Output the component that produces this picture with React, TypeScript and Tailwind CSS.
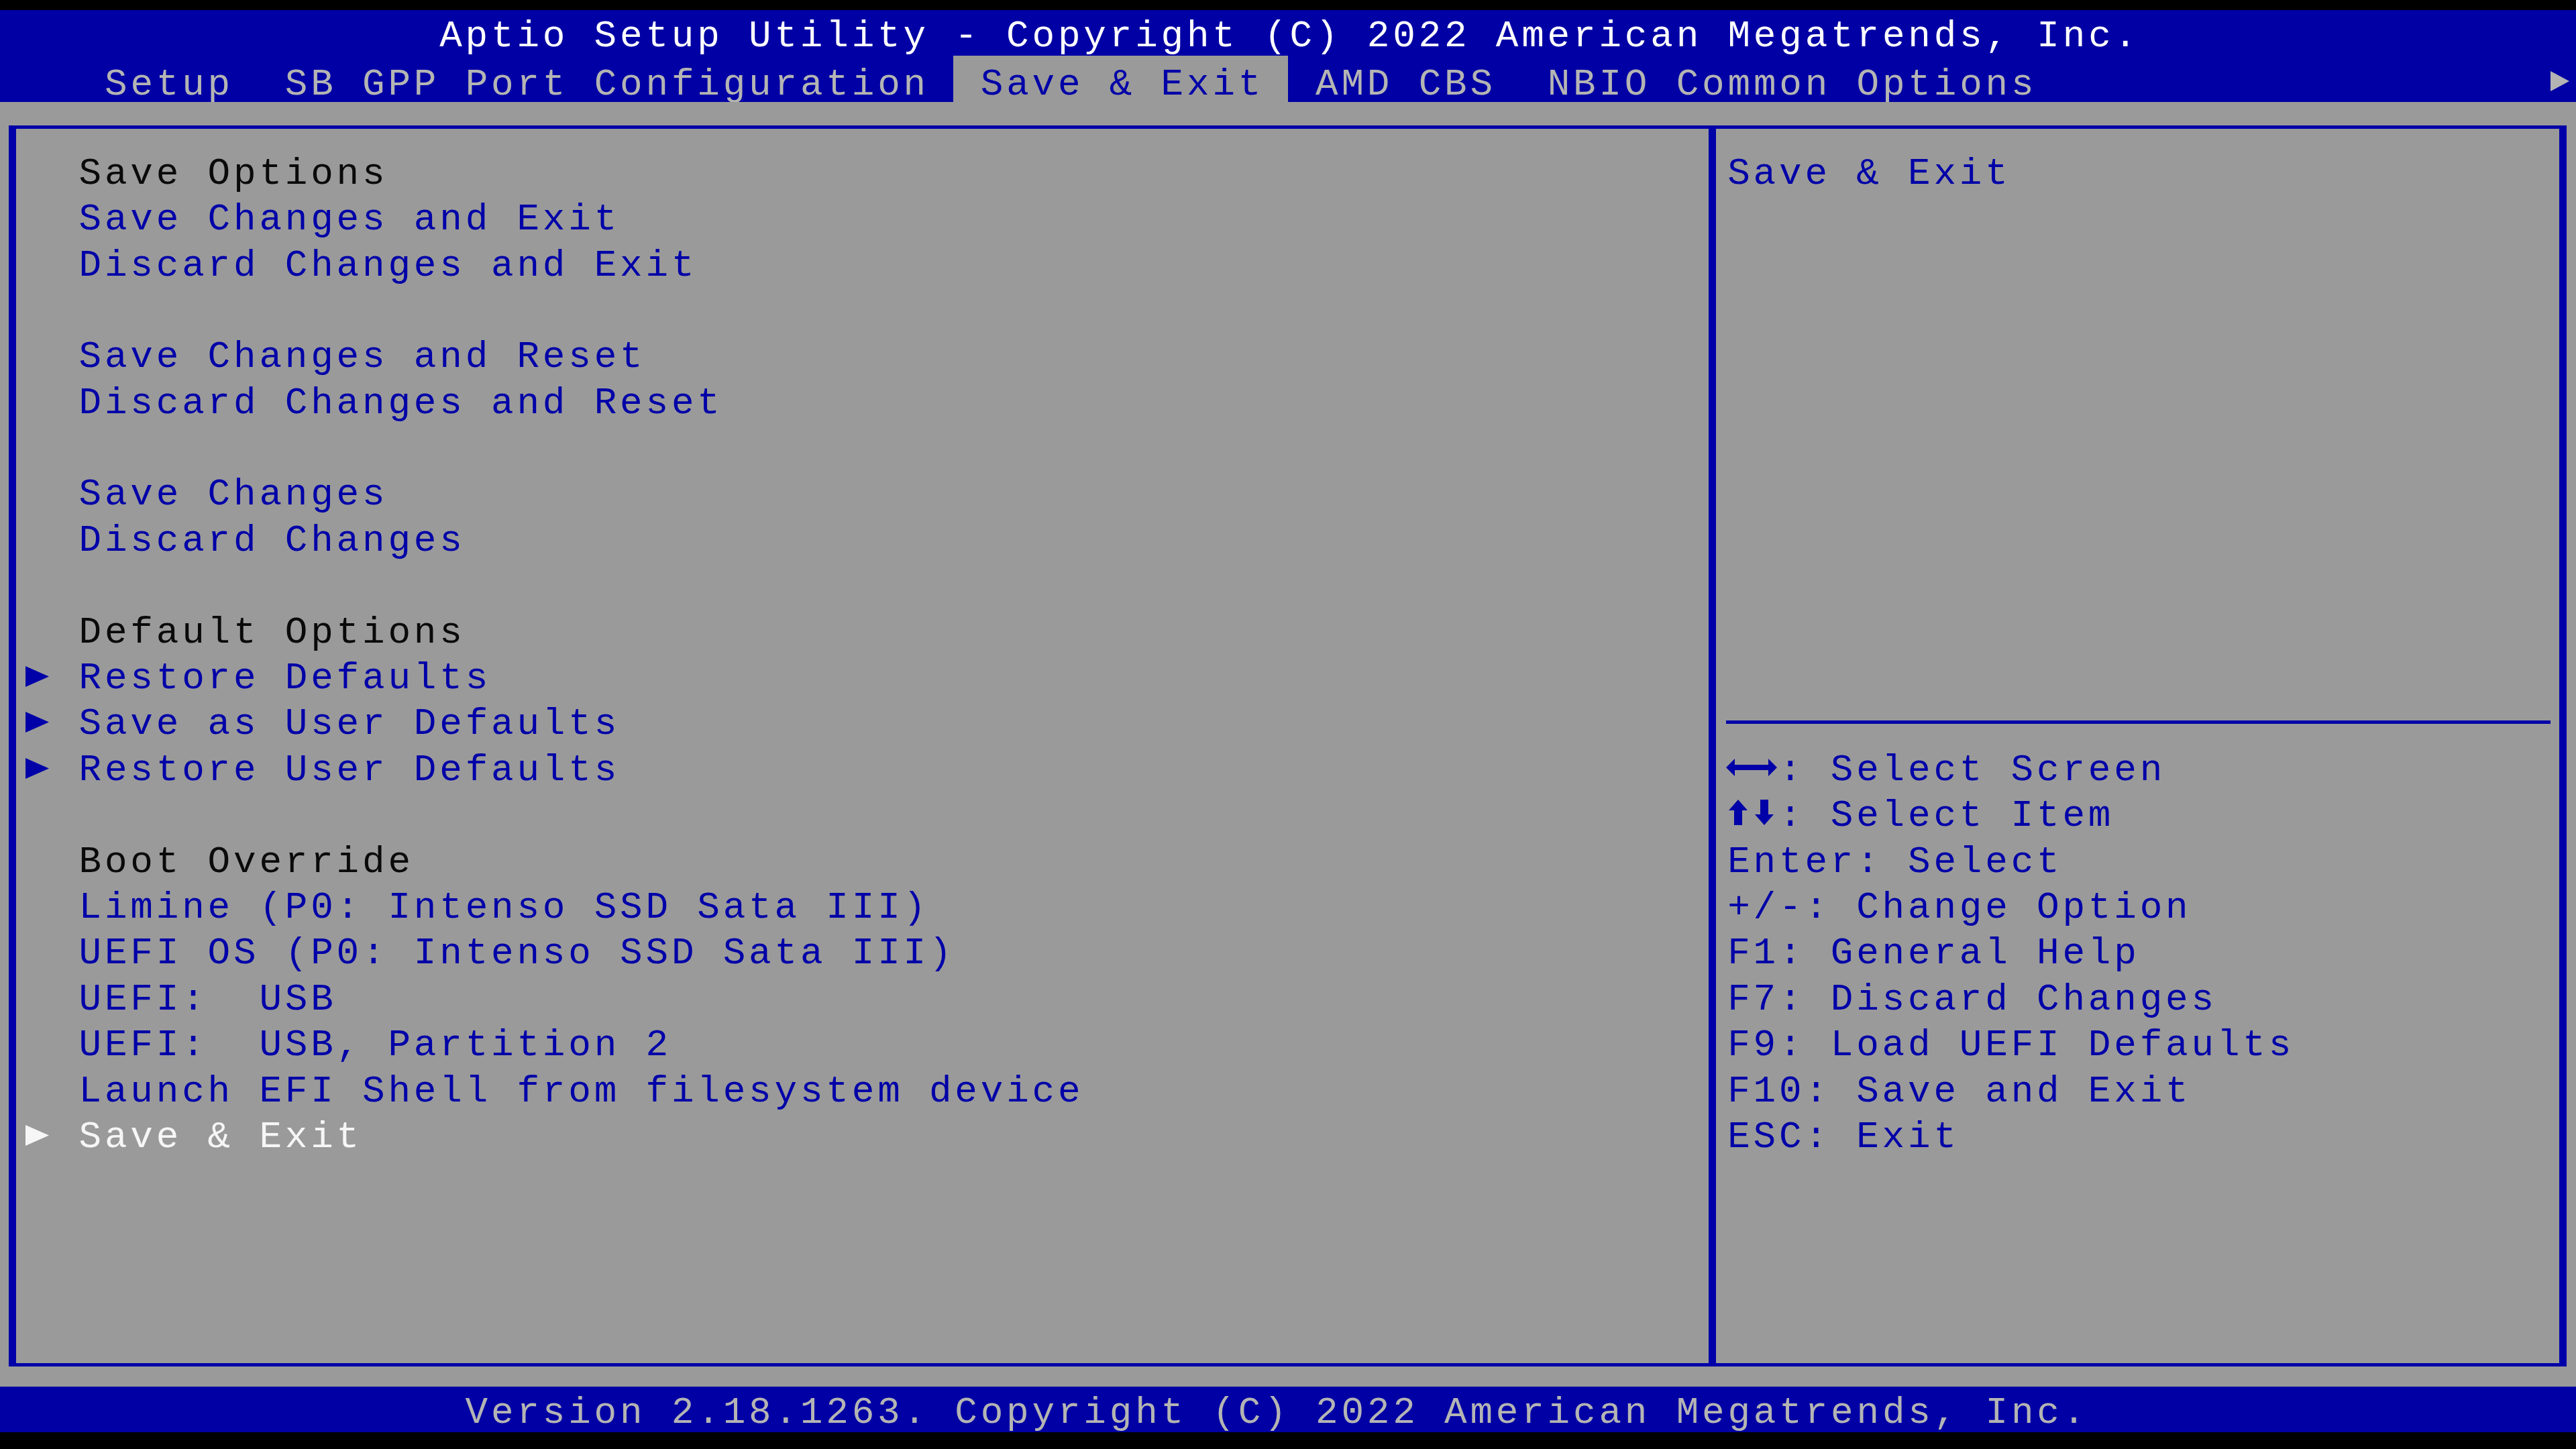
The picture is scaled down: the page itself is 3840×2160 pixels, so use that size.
import React from 'react';

// Aptio text-mode screen: 100 x 31 character cells, each 38.4 x 68.4 px
type Tone = 'head' | 'link' | 'active';

interface MenuItem {
  text: string;
  tone: Tone;
  sub?: boolean;
}

const toneClass: Record<Tone, string> = {
  head: 'text-[#0a0a0a]',
  link: 'text-[#0000a8]',
  active: 'text-[#f6f6f6]',
};

const menu: (MenuItem | null)[] = [
  { text: 'Save Options', tone: 'head' },
  { text: 'Save Changes and Exit', tone: 'link' },
  { text: 'Discard Changes and Exit', tone: 'link' },
  null,
  { text: 'Save Changes and Reset', tone: 'link' },
  { text: 'Discard Changes and Reset', tone: 'link' },
  null,
  { text: 'Save Changes', tone: 'link' },
  { text: 'Discard Changes', tone: 'link' },
  null,
  { text: 'Default Options', tone: 'head' },
  { text: 'Restore Defaults', tone: 'link', sub: true },
  { text: 'Save as User Defaults', tone: 'link', sub: true },
  { text: 'Restore User Defaults', tone: 'link', sub: true },
  null,
  { text: 'Boot Override', tone: 'head' },
  { text: 'Limine (P0: Intenso SSD Sata III)', tone: 'link' },
  { text: 'UEFI OS (P0: Intenso SSD Sata III)', tone: 'link' },
  { text: 'UEFI:  USB', tone: 'link' },
  { text: 'UEFI:  USB, Partition 2', tone: 'link' },
  { text: 'Launch EFI Shell from filesystem device', tone: 'link' },
  { text: 'Save & Exit', tone: 'active', sub: true },
];

const tabs = ['Setup', 'SB GPP Port Configuration', 'Save & Exit', 'AMD CBS', 'NBIO Common Options'];

const keyHelp = [
  'Enter: Select',
  '+/-: Change Option',
  'F1: General Help',
  'F7: Discard Changes',
  'F9: Load UEFI Defaults',
  'F10: Save and Exit',
  'ESC: Exit',
];

const row = 'h-[68.4px] flex';
const txt = 'pt-[10.6px] leading-[57.8px] whitespace-pre';

const Pointer = ({ className }: { className: string }) => (
  <svg width="35" height="31" viewBox="0 0 35 31" className={className}>
    <polygon points="0,0 35,15.5 0,31" fill="currentColor" />
  </svg>
);

const ArrowLeft = () => (
  <svg width="38" height="28" viewBox="0 0 38 28" className="fill-[#0000a8]">
    <path d="M0 14 L13 1 L13 10 L38 10 L38 18 L13 18 L13 27 Z" />
  </svg>
);

const ArrowRight = () => (
  <svg width="38" height="28" viewBox="0 0 38 28" className="fill-[#0000a8]">
    <path d="M38 14 L25 1 L25 10 L0 10 L0 18 L25 18 L25 27 Z" />
  </svg>
);

const ArrowUp = () => (
  <svg width="28" height="38" viewBox="0 0 28 38" className="fill-[#0000a8]">
    <path d="M14 0 L28 16 L20 16 L20 38 L8 38 L8 16 L0 16 Z" />
  </svg>
);

const ArrowDown = () => (
  <svg width="28" height="38" viewBox="0 0 28 38" className="fill-[#0000a8]">
    <path d="M14 38 L28 22 L20 22 L20 0 L8 0 L8 22 L0 22 Z" />
  </svg>
);

export default function App() {
  return (
    <div className="w-[3840px] h-[2160px] bg-black flex flex-col overflow-hidden font-['Liberation_Mono','DejaVu_Sans_Mono',monospace] text-[56px] tracking-[4.8px]">
      <div className="h-[15px] shrink-0" />

      {/* title + tab bar */}
      <header className="bg-[#0000a4] shrink-0">
        <div className={`${row} pl-[655.2px] text-white`}>
          <span className={txt}>Aptio Setup Utility - Copyright (C) 2022 American Megatrends, Inc.</span>
        </div>
        <div className={`${row} pl-[115.2px] text-[#b4b4b4]`}>
          {tabs.map((t) => (
            <div
              key={t}
              className={`pl-[40.8px] pr-[36px] ${t === 'Save & Exit' ? 'bg-[#9a9a9a] text-[#0000a8]' : ''}`}
            >
              <span className={txt}>{t}</span>
            </div>
          ))}
          <div className="ml-auto w-[38.4px] pt-[23px]">
            <svg width="28" height="30" viewBox="0 0 28 30" className="fill-[#b4b4b4]">
              <polygon points="0,0 28,15 0,30" />
            </svg>
          </div>
        </div>
      </header>

      {/* body */}
      <main className="bg-[#9a9a9a] h-[1915.2px] shrink-0 pt-[35.2px] pl-[13px] pr-[14px]">
        <div className="h-[1850px] border-x-[11px] border-y-[5px] border-[#0000a8] flex">
          <section className="w-[2523px] pt-[28.2px] pl-[14.4px]">
            {menu.map((m, i) =>
              m ? (
                <div key={i} className={`${row} ${toneClass[m.tone]}`}>
                  <div className="w-[38.4px] pt-[20.4px]">
                    {m.sub && <Pointer className={m.tone === 'active' ? 'text-[#f6f6f6]' : 'text-[#0000a8]'} />}
                  </div>
                  <div className="w-[38.4px]" />
                  <span className={`${txt} pl-[2.4px]`}>{m.text}</span>
                </div>
              ) : (
                <div key={i} className="h-[68.4px]" />
              )
            )}
          </section>

          <div className="w-[11px] bg-[#0000a8]" />

          <section className="flex-1 pt-[28.2px] pl-[14.8px] text-[#0000a8]">
            <div className={row}>
              <span className={`${txt} pl-[2.4px]`}>Save &amp; Exit</span>
            </div>
            <div className="h-[752.4px]" />
            <div className="h-[68.4px] pt-[33px]">
              <div className="h-[5px] w-[1228.8px] bg-[#0000a8]" />
            </div>
            <div className={row}>
              <div className="w-[38.4px] pt-[20.6px]">
                <ArrowLeft />
              </div>
              <div className="w-[38.4px] pt-[20.6px]">
                <ArrowRight />
              </div>
              <span className={`${txt} pl-[2.4px]`}>: Select Screen</span>
            </div>
            <div className={row}>
              <div className="w-[38.4px] pt-[14.6px] pl-[4.6px]">
                <ArrowUp />
              </div>
              <div className="w-[38.4px] pt-[14.6px] pl-[4.6px]">
                <ArrowDown />
              </div>
              <span className={`${txt} pl-[2.4px]`}>: Select Item</span>
            </div>
            {keyHelp.map((k) => (
              <div key={k} className={row}>
                <span className={`${txt} pl-[2.4px]`}>{k}</span>
              </div>
            ))}
          </section>
        </div>
      </main>

      {/* version line */}
      <footer className={`${row} bg-[#0000a4] shrink-0 pl-[693.6px] text-[#b4b4b4]`}>
        <span className={txt}>Version 2.18.1263. Copyright (C) 2022 American Megatrends, Inc.</span>
      </footer>
    </div>
  );
}
